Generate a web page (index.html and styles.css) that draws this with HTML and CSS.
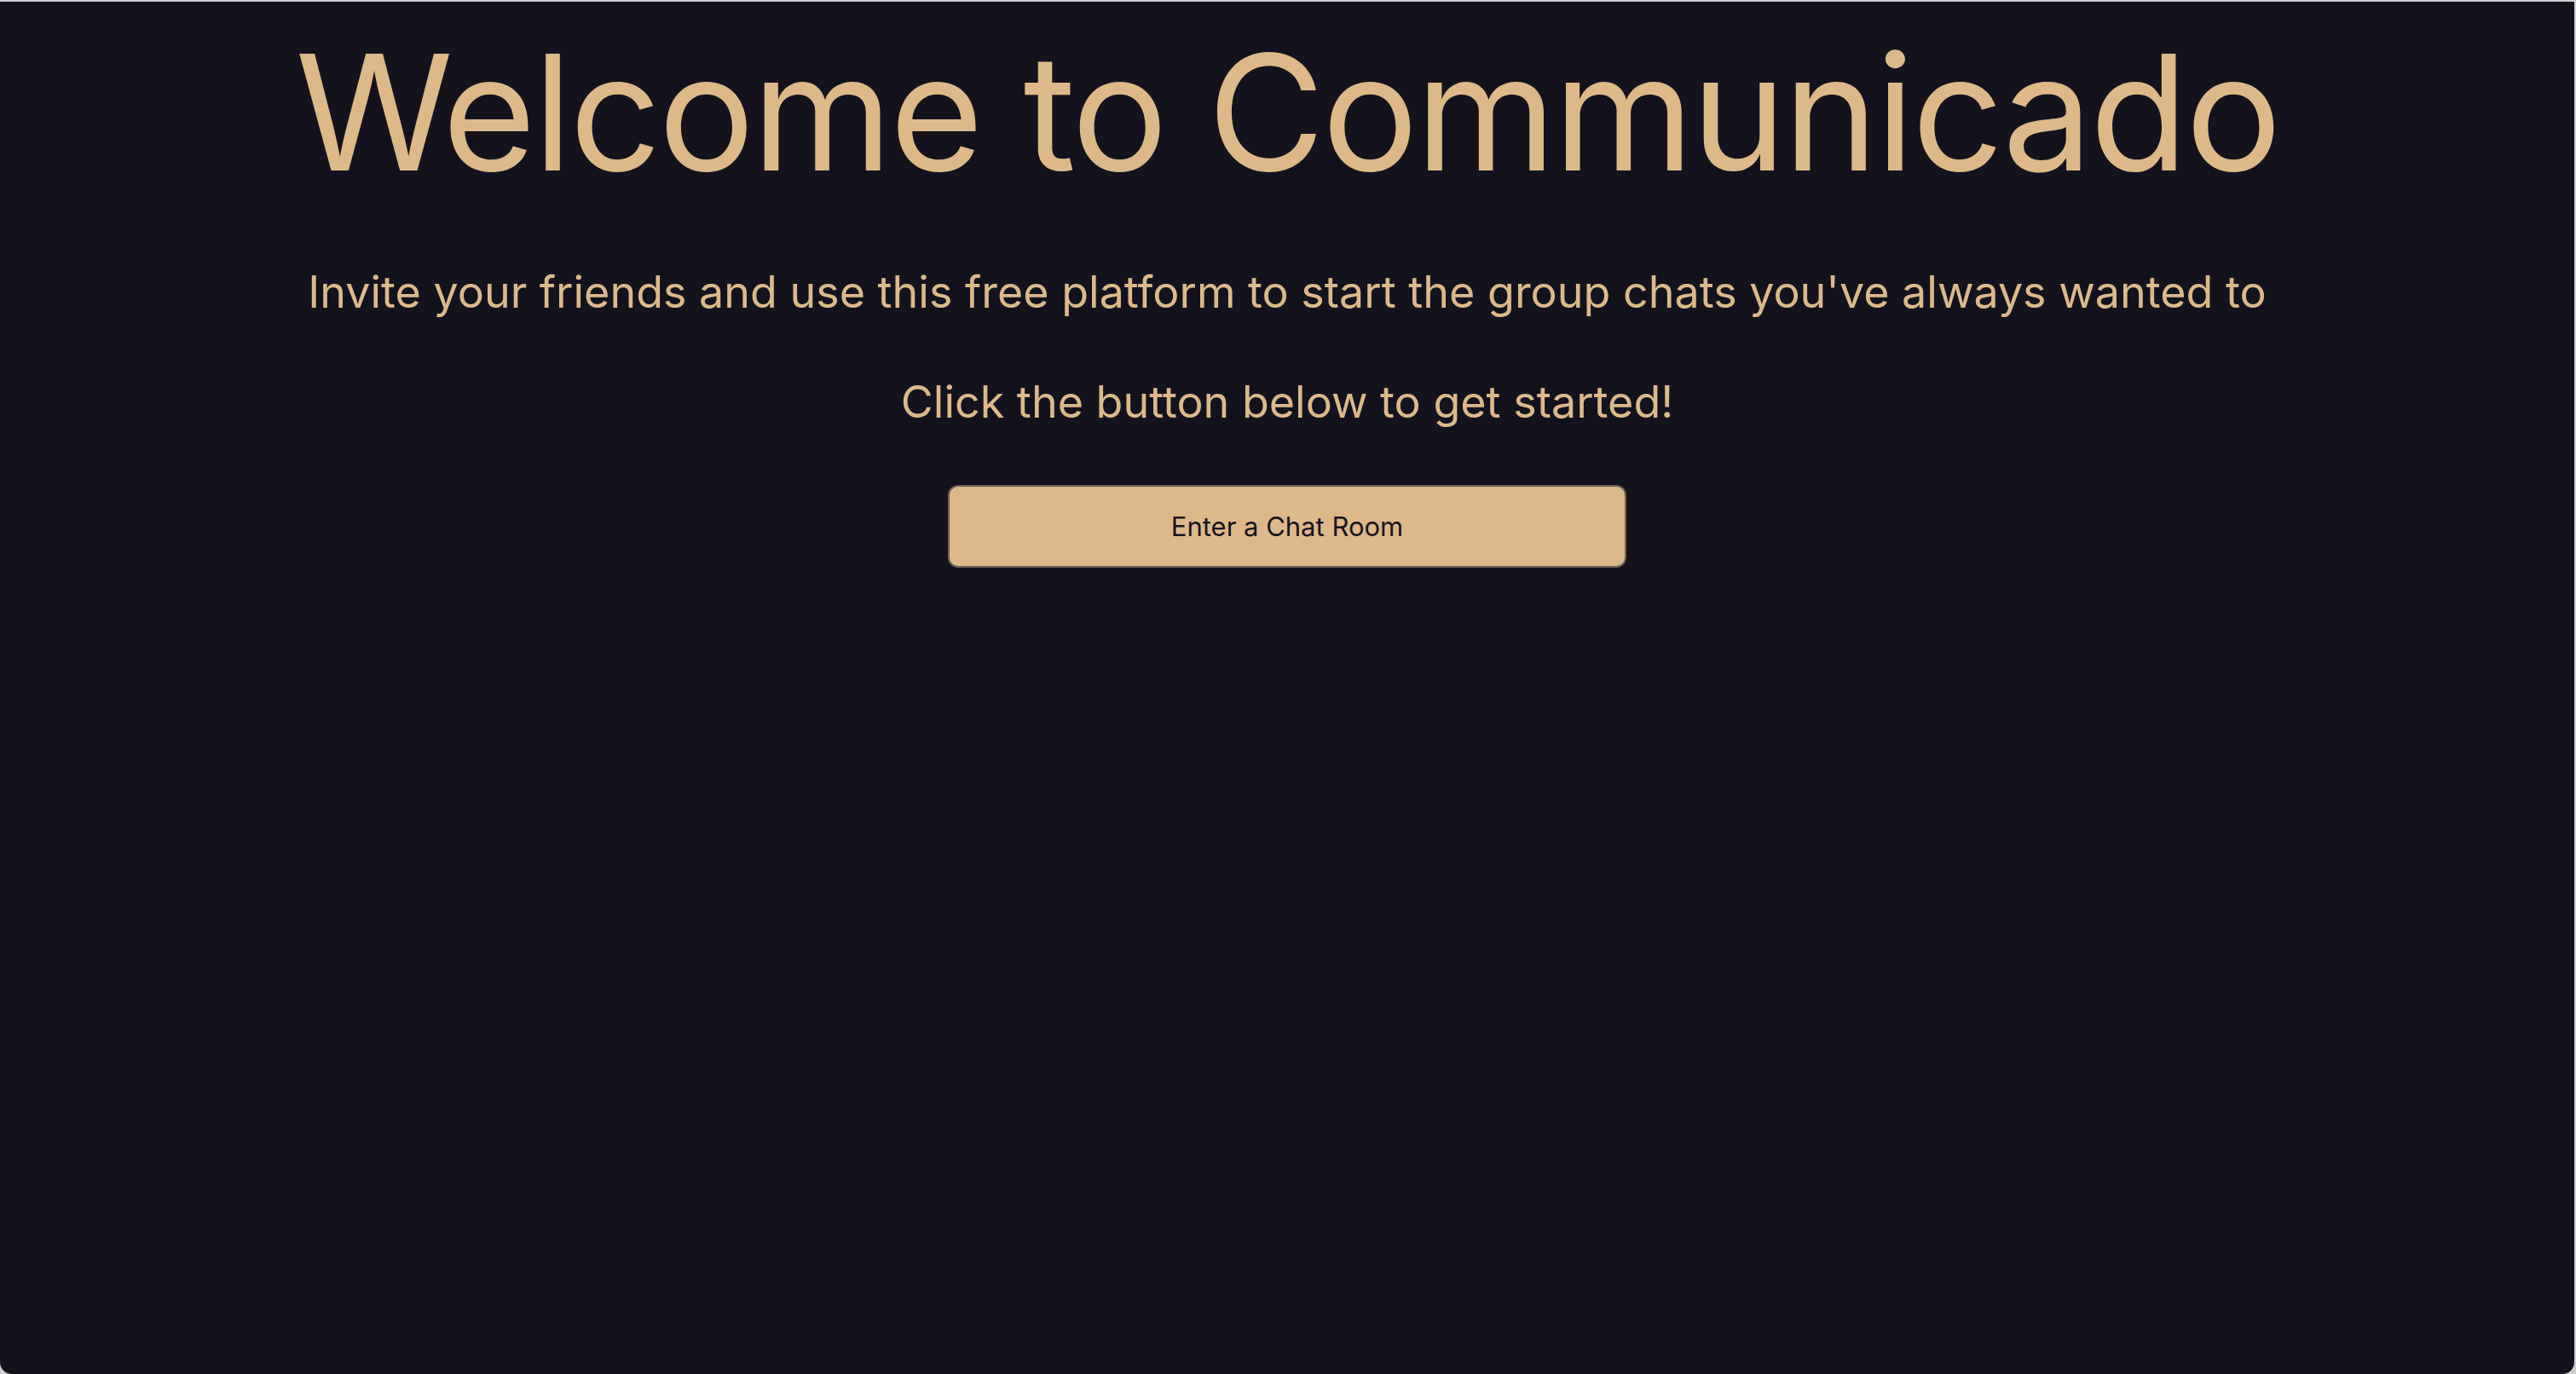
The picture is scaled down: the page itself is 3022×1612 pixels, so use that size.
FILE: index.html
```html
<!DOCTYPE html>
<html lang="en">
<head>
<meta charset="utf-8">
<title>Communicado</title>
<link rel="stylesheet" href="styles.css">
</head>
<body>
<div class="window">
  <main class="home">
    <h1 class="title">Welcome to Communicado</h1>
    <p class="lead">Invite your friends and use this free platform to start the group chats you've always wanted to</p>
    <p class="lead">Click the button below to get started!</p>
    <button class="enter-btn" type="button">Enter a Chat Room</button>
  </main>
</div>
</body>
</html>
```
FILE: styles.css
```css
html, body {
  margin: 0;
  padding: 0;
  background: #cfcfd2;
  height: 100%;
}
body {
  font-family: Inter, "Noto Sans", "Liberation Sans", sans-serif;
  padding-top: 2px;
  padding-right: 2px;
  box-sizing: border-box;
  overflow: hidden;
}
.window {
  background: #14131d;
  height: 1610px;
  border-radius: 0 0 14px 14px;
}
.home {
  display: flex;
  flex-direction: column;
  align-items: center;
  padding-top: 17px;
  color: #ddb98a;
}
.title {
  margin: 0;
  font-size: 188px;
  font-weight: 400;
  line-height: 1.2;
  letter-spacing: -3px;
}
.lead {
  margin: 67px 0 0;
  font-size: 52px;
  line-height: 1.2;
}
.enter-btn {
  margin-top: 66px;
  width: 796px;
  height: 97px;
  background: #ddb98a;
  color: #16151d;
  border: 2px solid #6b6258;
  border-radius: 12px;
  font-family: Inter, "Noto Sans", "Liberation Sans", sans-serif;
  font-size: 31px;
}
```
